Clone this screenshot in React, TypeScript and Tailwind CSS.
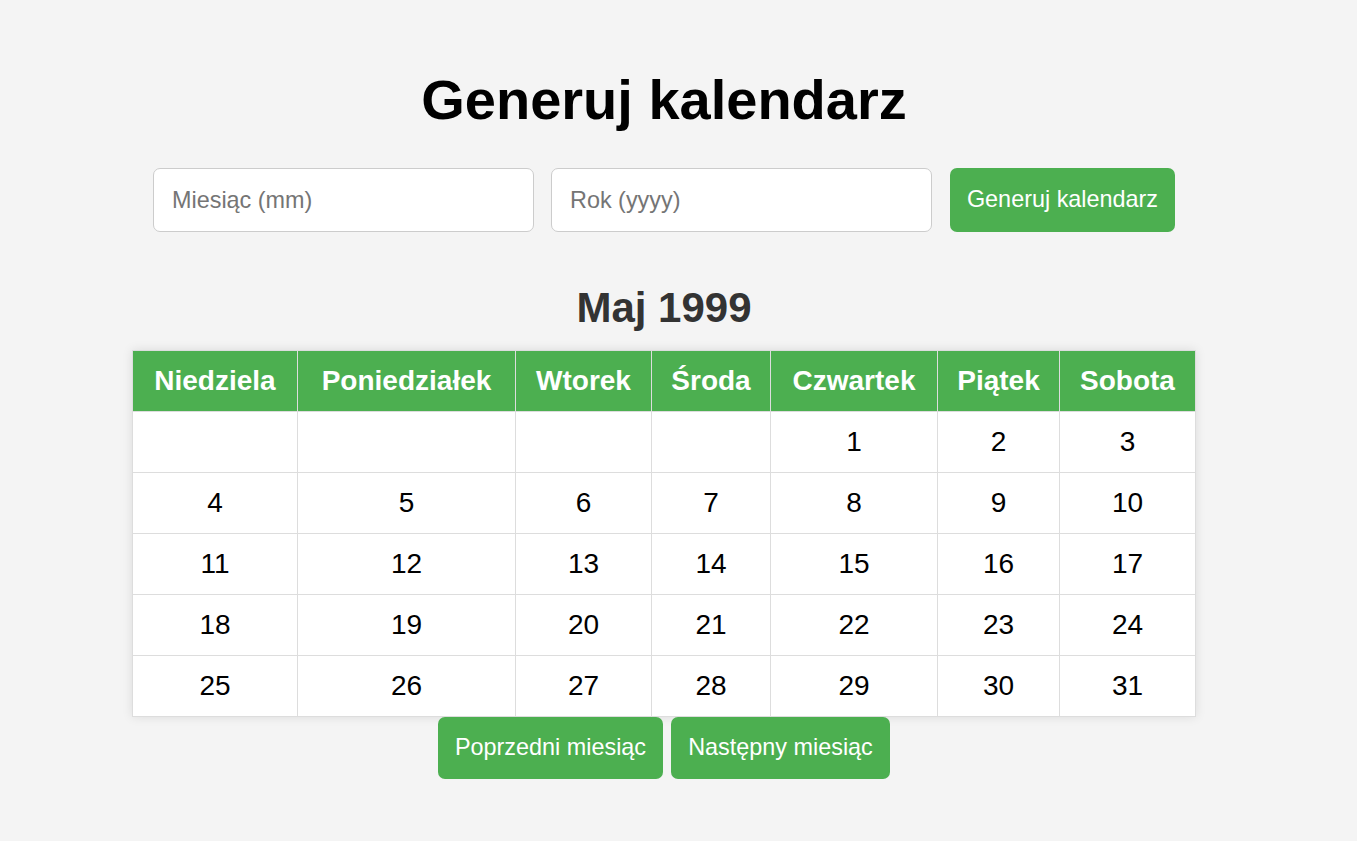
import React from 'react'

const days = ['Niedziela', 'Poniedziałek', 'Wtorek', 'Środa', 'Czwartek', 'Piątek', 'Sobota']
const colWidths = ['w-[165px]', 'w-[218px]', 'w-[136px]', 'w-[119px]', 'w-[167px]', 'w-[122px]', 'w-[136px]']

const buildWeeks = () => {
  const cells: (number | null)[] = [null, null, null, null]
  for (let d = 1; d <= 31; d++) cells.push(d)
  while (cells.length % 7 !== 0) cells.push(null)
  const weeks: (number | null)[][] = []
  for (let i = 0; i < cells.length; i += 7) weeks.push(cells.slice(i, i + 7))
  return weeks
}

const App: React.FC = () => {
  const weeks = buildWeeks()

  return (
    <div className="min-h-screen bg-[#f4f4f4] font-['Liberation_Sans',Arial,sans-serif]">
      <div className="w-[1328px] flex flex-col items-center pt-[68px]">
        <h1 className="text-[56px] font-bold text-black leading-[64px]">Generuj kalendarz</h1>

        <div className="flex items-center mt-[36px]">
          <input
            placeholder="Miesiąc (mm)"
            className="w-[381px] h-[64px] bg-white border border-[#ccc] rounded-[7px] px-[18px] text-[23.4px] text-black placeholder:text-[#757575] outline-none"
          />
          <input
            placeholder="Rok (yyyy)"
            className="w-[381px] h-[64px] bg-white border border-[#ccc] rounded-[7px] px-[18px] text-[23.4px] text-black placeholder:text-[#757575] outline-none ml-[17px]"
          />
          <button className="h-[64px] w-[225px] ml-[18px] bg-[#4caf50] text-white text-[23.4px] rounded-[7px]">
            Generuj kalendarz
          </button>
        </div>

        <h2 className="mt-[52px] text-[42px] font-bold text-[#333] leading-[48px]">Maj 1999</h2>

        <table className="mt-[18px] w-[1063px] table-fixed border-collapse bg-white shadow-[0_0_10px_rgba(0,0,0,0.1)]">
          <colgroup>
            {colWidths.map((w, i) => (
              <col key={i} className={w} />
            ))}
          </colgroup>
          <thead>
            <tr>
              {days.map((d) => (
                <th key={d} className="h-[61px] bg-[#4caf50] text-white text-[28px] font-bold border border-[#ddd] p-0 leading-[32px]">
                  {d}
                </th>
              ))}
            </tr>
          </thead>
          <tbody>
            {weeks.map((w, i) => (
              <tr key={i}>
                {w.map((d, j) => (
                  <td key={j} className="h-[61px] text-center text-[28px] text-black border border-[#ddd] p-0 leading-[32px]">
                    {d ?? ''}
                  </td>
                ))}
              </tr>
            ))}
          </tbody>
        </table>

        <div className="flex gap-2">
          <button className="h-[62px] w-[225px] bg-[#4caf50] text-white text-[23.4px] rounded-[7px]">Poprzedni miesiąc</button>
          <button className="h-[62px] w-[219px] bg-[#4caf50] text-white text-[23.4px] rounded-[7px]">Następny miesiąc</button>
        </div>
      </div>
    </div>
  )
}

export default App
